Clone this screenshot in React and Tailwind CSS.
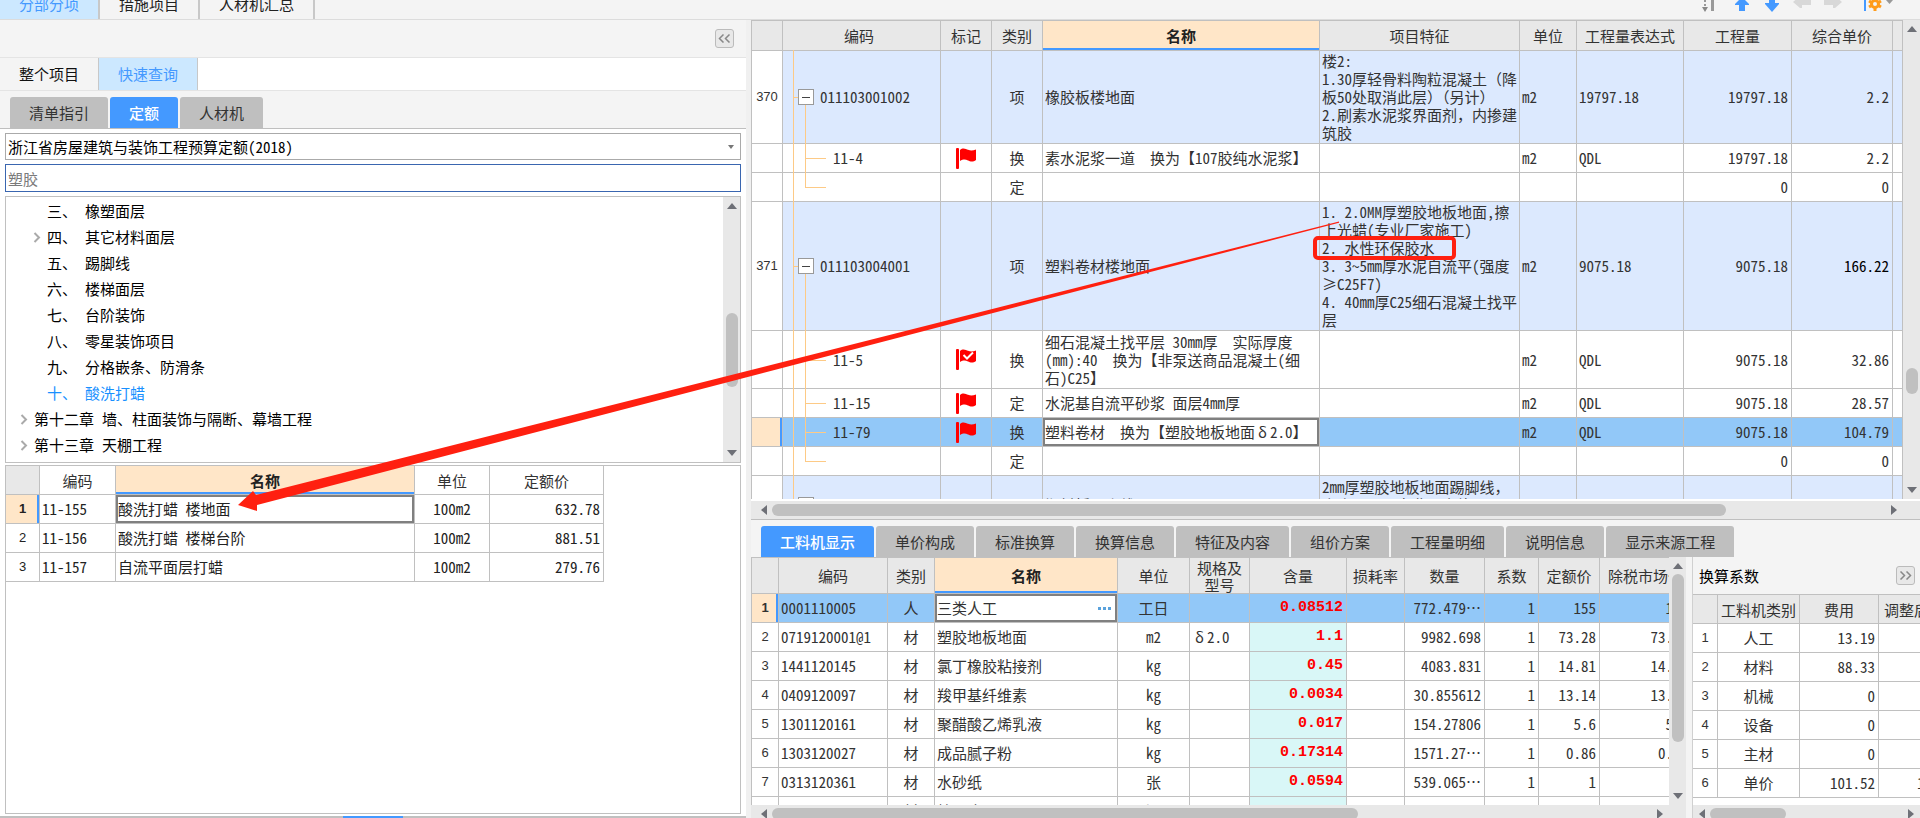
import { useState } from 'react';
import clsx from 'clsx';

const TREE = [
  { no: '三、', label: '橡塑面层', level: 1 },
  { no: '四、', label: '其它材料面层', level: 1, hasChildren: true },
  { no: '五、', label: '踢脚线', level: 1 },
  { no: '六、', label: '楼梯面层', level: 1 },
  { no: '七、', label: '台阶装饰', level: 1 },
  { no: '八、', label: '零星装饰项目', level: 1 },
  { no: '九、', label: '分格嵌条、防滑条', level: 1 },
  { no: '十、', label: '酸洗打蜡', level: 1, active: true },
  { no: '第十二章', label: '墙、柱面装饰与隔断、幕墙工程', level: 0, hasChildren: true },
  { no: '第十三章', label: '天棚工程', level: 0, hasChildren: true }
];

const QUOTAS = [
  { code: '11-155', name: '酸洗打蜡 楼地面', unit: '100m2', price: '632.78' },
  { code: '11-156', name: '酸洗打蜡 楼梯台阶', unit: '100m2', price: '881.51' },
  { code: '11-157', name: '自流平面层打蜡', unit: '100m2', price: '279.76' }
];

const BILL = [
  {
    no: '370', kind: 'item', height: 'h-[93px]', code: '011103001002', type: '项', name: '橡胶板楼地面',
    feature: '楼2:\n1.30厚轻骨料陶粒混凝土（降\n板50处取消此层）（另计）\n2.刷素水泥浆界面剂，内掺建\n筑胶',
    unit: 'm2', expr: '19797.18', qty: '19797.18', price: '2.2'
  },
  { kind: 'child', height: 'h-[29px]', code: '11-4', flag: 'flag', type: '换', name: '素水泥浆一道　换为【107胶纯水泥浆】', unit: 'm2', expr: 'QDL', qty: '19797.18', price: '2.2' },
  { kind: 'last', height: 'h-[29px]', type: '定', qty: '0', price: '0' },
  {
    no: '371', kind: 'item', height: 'h-[129px]', code: '011103004001', type: '项', name: '塑料卷材楼地面',
    feature: '1. 2.0MM厚塑胶地板地面,擦\n上光蜡(专业厂家施工)\n2. 水性环保胶水\n3. 3~5mm厚水泥自流平(强度\n≥C25F7)\n4. 40mm厚C25细石混凝土找平\n层',
    unit: 'm2', expr: '9075.18', qty: '9075.18', price: '166.22'
  },
  { kind: 'child', height: 'h-[58px]', code: '11-5', flag: 'checked', type: '换', name: '细石混凝土找平层 30mm厚　实际厚度\n(mm):40　换为【非泵送商品混凝土(细\n石)C25】', unit: 'm2', expr: 'QDL', qty: '9075.18', price: '32.86' },
  { kind: 'child', height: 'h-[29px]', code: '11-15', flag: 'flag', type: '定', name: '水泥基自流平砂浆 面层4mm厚', unit: 'm2', expr: 'QDL', qty: '9075.18', price: '28.57' },
  { kind: 'child', height: 'h-[29px]', code: '11-79', flag: 'flag', type: '换', name: '塑料卷材　换为【塑胶地板地面δ2.0】', unit: 'm2', expr: 'QDL', qty: '9075.18', price: '104.79', selected: true },
  { kind: 'last', height: 'h-[29px]', type: '定', qty: '0', price: '0' },
  { kind: 'item', height: 'h-[58px]', type: '项', name: '塑料板踢脚线', feature: '2mm厚塑胶地板地面踢脚线，\n高度120mm,专业厂家施工\n水性环保胶水' }
];

const MATERIALS = [
  { code: '0001110005', type: '人', name: '三类人工', unit: '工日', spec: '', amount: '0.08512', qty: '772.479⋯', factor: '1', price: '155', market: '155' },
  { code: '0719120001@1', type: '材', name: '塑胶地板地面', unit: 'm2', spec: 'δ2.0', amount: '1.1', qty: '9982.698', factor: '1', price: '73.28', market: '73.28' },
  { code: '1441120145', type: '材', name: '氯丁橡胶粘接剂', unit: 'kg', spec: '', amount: '0.45', qty: '4083.831', factor: '1', price: '14.81', market: '14.81' },
  { code: '0409120097', type: '材', name: '羧甲基纤维素', unit: 'kg', spec: '', amount: '0.0034', qty: '30.855612', factor: '1', price: '13.14', market: '13.14' },
  { code: '1301120161', type: '材', name: '聚醋酸乙烯乳液', unit: 'kg', spec: '', amount: '0.017', qty: '154.27806', factor: '1', price: '5.6', market: '5.6' },
  { code: '1303120027', type: '材', name: '成品腻子粉', unit: 'kg', spec: '', amount: '0.17314', qty: '1571.27⋯', factor: '1', price: '0.86', market: '0.86' },
  { code: '0313120361', type: '材', name: '水砂纸', unit: '张', spec: '', amount: '0.0594', qty: '539.065⋯', factor: '1', price: '1', market: '1' },
  { code: '', type: '材', name: '棉纱头', unit: 'kg', spec: '', amount: '', qty: '', factor: '', price: '', market: '' }
];

const FACTORS = [
  ['人工', '13.19', ''],
  ['材料', '88.33', ''],
  ['机械', '0', ''],
  ['设备', '0', ''],
  ['主材', '0', ''],
  ['单价', '101.52', '101.52']
];

const DETAIL_TABS = ['工料机显示', '单价构成', '标准换算', '换算信息', '特征及内容', '组价方案', '工程量明细', '说明信息', '显示来源工程'];

const UI_FONT = 'font-["Noto_Sans_CJK_SC",sans-serif]';
const GRID_FONT = 'font-["Noto_Sans_Mono_CJK_SC","Noto_Sans_CJK_SC",monospace]';
const LINE = 'border-r border-b border-[#c0c0c0]';

function Arrow({ dir }) {
  const points = {
    up: '0,8 5,2 10,8',
    down: '0,2 10,2 5,8',
    left: '8,0 2,5 8,10',
    right: '2,0 8,5 2,10'
  };
  return (
    <svg width="10" height="10" viewBox="0 0 10 10" aria-hidden="true">
      <polygon points={points[dir]} fill="#6e7077" />
    </svg>
  );
}

// Vertical scrollbar; before / size / after are flex weights of the track
function VScroll({ before, size, after }) {
  return (
    <div className="w-[17px] shrink-0 bg-[#e8e8e8] flex flex-col items-center py-1">
      <Arrow dir="up" />
      <div className="flex-1 flex flex-col items-center pt-[3px] pb-1">
        <div style={{ flexGrow: before }} />
        <div className="w-3 rounded-full bg-[#c0c0c0]" style={{ flexGrow: size }} />
        <div style={{ flexGrow: after }} />
      </div>
      <Arrow dir="down" />
    </div>
  );
}

function HScroll({ size, after }) {
  return (
    <div className="h-[18px] shrink-0 bg-[#e8e8e8] flex items-center px-1">
      <Arrow dir="left" />
      <div className="flex-1 flex px-[3px]">
        <div className="h-3 rounded-full bg-[#c0c0c0]" style={{ flexGrow: size }} />
        <div style={{ flexGrow: after }} />
      </div>
      <Arrow dir="right" />
    </div>
  );
}

function Flag({ checked }) {
  return (
    <svg width="20" height="21" viewBox="0 0 20 21" className="mx-auto block" role="img" aria-label="标记">
      <rect x="0" y="0" width="3" height="21" rx="1" fill="#ff0000" />
      <path d="M4 2 C7 -1 10 1 12 1.8 C15 3 17 2.500 20 1.500 V12 C17 14.500 14 13.500 12 12.600 C9 11 7 11.500 4 13 Z" fill="#ff0000" />
      {checked && <path d="M7.500 6 L11 9.500 L17 3.500" fill="none" stroke="#fff" strokeWidth="2" />}
    </svg>
  );
}

// Greek delta takes a full-width slot, like the Chinese characters round it
function Spec({ text = '' }) {
  const [before, after] = text.split('δ');
  if (after === undefined) return text;
  return (
    <>
      {before}
      <span className="inline-block w-[15px] text-center">δ</span>
      {after}
    </>
  );
}

function PanelTab({ active, children, ...rest }) {
  return (
    <button
      type="button"
      className={clsx(
        'h-[31px] px-[19px] rounded-t-[3px] text-[15px] leading-[18px] whitespace-nowrap',
        active ? 'bg-[#4499ff] text-white font-medium' : 'bg-[#bfbfbf] text-[#333]'
      )}
      {...rest}
    >
      {children}
    </button>
  );
}

function Th({ className, current, children }) {
  return (
    <th
      className={clsx(
        LINE, 'p-0 text-center align-middle text-[15px] leading-[17px] whitespace-pre overflow-hidden',
        current ? 'bg-[#ffe6c8] font-bold text-[#222] shadow-[inset_0_-2px_0_#4499ff]' : 'font-normal text-[#333]',
        className
      )}
    >
      {children}
    </th>
  );
}

function Td({ className, children }) {
  return (
    <td className={clsx(LINE, 'p-0 align-middle text-[15px] leading-[18px] whitespace-pre overflow-hidden', className)}>
      {children}
    </td>
  );
}

function RowNo({ active, children }) {
  return (
    <td
      className={clsx(
        LINE, 'p-0 text-center align-middle font-["Liberation_Sans",sans-serif] text-[13px] leading-[18px]',
        active ? 'bg-[#ffe6c8] font-bold shadow-[inset_-2px_0_0_#4499ff]' : 'bg-white'
      )}
    >
      {children}
    </td>
  );
}

// Connector lines of the bill tree, drawn behind the code text
function CodeCell({ row }) {
  return (
    <td className={clsx(LINE, 'relative p-0 align-middle text-[15px] leading-[18px]')}>
      <span className="absolute left-[10px] -top-px -bottom-px w-px bg-[#fdca86]" />
      {row.kind === 'item' && (
        <>
          <span className="absolute left-[10px] top-1/2 w-[6px] h-px bg-[#fdca86]" />
          <span className="absolute left-[22px] top-1/2 -bottom-px w-px bg-[#fdca86]" />
          <div className="relative flex items-center pl-[15px] gap-[6px]">
            <button type="button" aria-label="折叠" className="size-4 shrink-0 bg-white border border-[#999] flex items-center justify-center">
              <span className="w-2 h-px bg-[#444]" />
            </button>
            {row.code}
          </div>
        </>
      )}
      {row.kind !== 'item' && (
        <>
          <span className={clsx('absolute left-[22px] -top-px w-px bg-[#fdca86]', row.kind === 'last' ? 'bottom-1/2' : '-bottom-px')} />
          <span className="absolute left-[22px] top-1/2 w-[21px] h-px bg-[#fdca86]" />
          <div className="pl-[50px]">{row.code}</div>
        </>
      )}
    </td>
  );
}

function TopBar() {
  const tabs = ['分部分项', '措施项目', '人材机汇总'];
  return (
    <header className="h-5 shrink-0 flex items-end justify-between overflow-hidden bg-[#f4f4f4] border-b border-[#dcdcdc]">
      <nav className="flex">
        {tabs.map((tab, i) => (
          <button
            key={tab}
            type="button"
            className={clsx(
              'h-[30px] px-[19px] border-r-2 border-[#c8c8c8] text-[15px] leading-[18px]',
              i === 0 ? 'bg-[#cce8ff] text-[#4499ff]' : 'text-[#222]'
            )}
          >
            {tab}
          </button>
        ))}
      </nav>
      <div className="flex gap-[11px] pr-[25px]">
        <button type="button" aria-label="排序" className="w-5">
          <svg width="20" height="19" viewBox="0 0 20 19">
            <path d="M5 0V2M5 4V6" stroke="#999" strokeWidth="2" />
            <path d="M2 7H8L5 12Z" fill="#888" />
            <rect x="11" y="0" width="3" height="11" fill="#999" />
          </svg>
        </button>
        <button type="button" aria-label="上移" className="w-5">
          <svg width="20" height="19" viewBox="0 0 20 19">
            <path d="M11 -3 L18 4 V5 H14 V11 H8 V5 H4 V4 Z" fill="#4499ff" />
          </svg>
        </button>
        <button type="button" aria-label="下移" className="w-5">
          <svg width="20" height="19" viewBox="0 0 20 19">
            <path d="M7 0 H13 V3 H17 V4 L10 12 L3 4 V3 H7 Z" fill="#4499ff" />
          </svg>
        </button>
        <button type="button" aria-label="后退" className="w-5">
          <svg width="20" height="19" viewBox="0 0 20 19">
            <path d="M0 2 L7 -4 V0 H18 V5 H9 V8 H7 Z" fill="#d8d8d8" />
          </svg>
        </button>
        <button type="button" aria-label="前进" className="w-5">
          <svg width="20" height="19" viewBox="0 0 20 19">
            <path d="M18 2 L11 -4 V0 H0 V5 H9 V8 H11 Z" fill="#d8d8d8" />
          </svg>
        </button>
        <button type="button" aria-label="列设置" className="w-10">
          <svg width="40" height="19" viewBox="0 0 40 19">
            <rect x="9" y="0" width="2" height="11" fill="#4499ff" />
            <circle cx="20" cy="4" r="3.500" fill="none" stroke="#ff9c1a" strokeWidth="3" />
            <path d="M20 7V11M14 7L16.500 5.500M26 7L23.500 5.500M14 1L16.500 2.500M26 1L23.500 2.500" stroke="#ff9c1a" strokeWidth="3" />
            <path d="M31 0H38L34.500 4Z" fill="#999" />
          </svg>
        </button>
      </div>
    </header>
  );
}

function QueryPanel() {
  const [keyword, setKeyword] = useState('塑胶');
  return (
    <aside className="flex-[751] min-w-0 flex bg-[#f0f0f0]">
      <div className="flex-1 min-w-0 mr-[5px] flex flex-col bg-white">
        <div className="h-[38px] shrink-0 flex items-center justify-end pr-3 bg-[#f4f4f4] border-b border-[#e4e4e4]">
          <button type="button" aria-label="收起" className="size-[19px] rounded-[3px] border border-[#bbb] bg-[#e8e8e8] flex items-center justify-center">
            <svg width="13" height="9" viewBox="0 0 13 9" fill="none" stroke="#888" strokeWidth="1.500">
              <path d="M5.500 0.500L1.500 4.500L5.500 8.500M11.500 0.500L7.500 4.500L11.500 8.500" />
            </svg>
          </button>
        </div>
        <div className="h-[33px] shrink-0 flex border-b border-[#e4e4e4]">
          <button type="button" className="px-[19px] bg-[#f4f4f4] border-r border-[#c8c8c8] text-[15px] text-[#111]">整个项目</button>
          <button type="button" className="px-[19px] bg-[#cce8ff] border-r border-[#c8c8c8] text-[15px] text-[#4499ff]">快速查询</button>
        </div>
        <div className="h-[38px] shrink-0 flex items-end gap-0.5 pl-[10px] bg-[#f4f4f4] border-b border-[#bfbfbf]">
          <PanelTab>清单指引</PanelTab>
          <PanelTab active>定额</PanelTab>
          <PanelTab>人材机</PanelTab>
        </div>
        <div className={clsx('flex-1 min-h-0 flex flex-col gap-1 pt-1 pl-[5px] pr-[5px]', GRID_FONT)}>
          <div className="relative h-[27px] shrink-0">
            <select aria-label="定额库" className="w-full h-full appearance-none border border-[#aaa] bg-white pl-0.5 text-[15px] leading-[18px] text-black">
              <option>浙江省房屋建筑与装饰工程预算定额(2018)</option>
            </select>
            <svg width="6" height="4" viewBox="0 0 6 4" className="absolute right-[7px] top-3 pointer-events-none">
              <path d="M0 0H6L3 4Z" fill="#777" />
            </svg>
          </div>
          <input
            aria-label="查询"
            value={keyword}
            onChange={(e) => setKeyword(e.target.value)}
            className="h-7 shrink-0 border border-[#3a66b0] pl-0.5 text-[15px] leading-[18px] text-[#7a7a7a] bg-white"
          />
          <div className="flex-[270] min-h-0 flex border border-[#c0c0c0] overflow-hidden">
            <ul className="flex-1 pt-px">
              {TREE.map((node) => (
                <li
                  key={node.no}
                  className={clsx(
                    'h-[26px] flex items-center text-[15px] leading-[18px] whitespace-pre',
                    node.level === 0 ? 'pl-[14px]' : 'pl-[27px]',
                    node.active ? 'text-[#1890ff]' : 'text-black'
                  )}
                >
                  <span className="w-[14px] shrink-0">
                    {node.hasChildren && (
                      <svg width="8" height="11" viewBox="0 0 8 11" fill="none" stroke="#aaa" strokeWidth="2">
                        <path d="M1.500 1L6 5.500L1.500 10" />
                      </svg>
                    )}
                  </span>
                  <a href="#" className="flex gap-2">
                    <span>{node.no}</span>
                    <span>{node.label}</span>
                  </a>
                </li>
              ))}
            </ul>
            <VScroll before={100} size={75} after={58} />
          </div>
          <div className="flex-[353] min-h-0 -mt-0.5 mb-0.5 border border-[#c0c0c0] overflow-hidden">
            <table className="table-fixed border-separate border-spacing-0 w-[598px] text-[#222]">
              <colgroup>
                <col className="w-[34px]" />
                <col className="w-[76px]" />
                <col />
                <col className="w-[75px]" />
                <col className="w-[114px]" />
              </colgroup>
              <thead>
                <tr className="h-[29px]">
                  <Th className="bg-[#e8e8e8]" />
                  <Th>编码</Th>
                  <Th current>名称</Th>
                  <Th>单位</Th>
                  <Th>定额价</Th>
                </tr>
              </thead>
              <tbody>
                {QUOTAS.map((q, i) => (
                  <tr key={q.code} className="h-[29px]">
                    <RowNo active={i === 0}>{i + 1}</RowNo>
                    <Td className="pl-0.5">{q.code}</Td>
                    <Td className={clsx('pl-0.5', i === 0 && 'shadow-[inset_0_0_0_2px_#808080]')}>{q.name}</Td>
                    <Td className="text-center">{q.unit}</Td>
                    <Td className="text-right pr-[3px]">{q.price}</Td>
                  </tr>
                ))}
              </tbody>
            </table>
          </div>
        </div>
        <div className="h-0.5 shrink-0 flex justify-center bg-[#c0c0c0]">
          <span className="w-[60px] bg-[#4499ff]" />
        </div>
      </div>
    </aside>
  );
}

function BillGrid() {
  return (
    <section className="flex-[500] min-h-0 flex flex-col border-b border-[#bfbfbf] bg-[#e8e8e8]">
      <div className="flex-1 min-h-0 flex">
        <div className={clsx('flex-1 min-w-0 overflow-hidden bg-white border-t border-l border-[#c0c0c0]', GRID_FONT)}>
          <table className="table-fixed border-separate border-spacing-0 w-full text-[#333]">
            <colgroup>
              <col className="w-[31px]" />
              <col className="w-[158px]" />
              <col className="w-[51px]" />
              <col className="w-[51px]" />
              <col />
              <col className="w-[200px]" />
              <col className="w-[57px]" />
              <col className="w-[107px]" />
              <col className="w-[108px]" />
              <col className="w-[101px]" />
              <col className="w-[10px]" />
            </colgroup>
            <thead>
              <tr className="h-[30px] bg-[#e8e8e8]">
                <Th />
                <Th className="pr-[5px]">编码</Th>
                <Th>标记</Th>
                <Th>类别</Th>
                <Th current>名称</Th>
                <Th>项目特征</Th>
                <Th>单位</Th>
                <Th>工程量表达式</Th>
                <Th>工程量</Th>
                <Th>综合单价</Th>
                <Th />
              </tr>
            </thead>
            <tbody>
              {BILL.map((row, i) => (
                <tr
                  key={i}
                  className={clsx(row.height, row.selected ? 'bg-[#92c8f8]' : row.kind === 'item' ? 'bg-[#dce9fe]' : 'bg-white')}
                >
                  <RowNo active={row.selected}>{row.no}</RowNo>
                  <CodeCell row={row} />
                  <Td>{row.flag && <Flag checked={row.flag === 'checked'} />}</Td>
                  <Td className="text-center">{row.type}</Td>
                  <Td className={clsx('pl-0.5', row.selected && 'bg-white shadow-[inset_0_0_0_2px_#808080]')}>
                    <Spec text={row.name} />
                  </Td>
                  <Td className="pl-0.5">{row.feature}</Td>
                  <Td className="pl-0.5">{row.unit}</Td>
                  <Td className="pl-0.5">{row.expr}</Td>
                  <Td className="text-right pr-[3px]">{row.qty}</Td>
                  <Td className={clsx('text-right pr-[3px]', row.price === '166.22' && 'text-black')}>{row.price}</Td>
                  <Td />
                </tr>
              ))}
            </tbody>
          </table>
        </div>
        <VScroll before={332} size={26} after={88} />
      </div>
      <div className="border-t-2 border-white pr-[17px] pl-1">
        <HScroll size={956} after={160} />
      </div>
    </section>
  );
}

function MaterialGrid() {
  return (
    <div className="flex-1 min-w-0 flex flex-col">
      <div className="flex-1 min-h-0 flex">
        <div className={clsx('flex-1 min-w-0 overflow-hidden bg-white border-l border-t border-[#c0c0c0]', GRID_FONT)}>
          <table className="table-fixed border-separate border-spacing-0 w-full min-w-[940px] text-[#333]">
            <colgroup>
              <col className="w-[27px]" />
              <col className="w-[109px]" />
              <col className="w-[47px]" />
              <col />
              <col className="w-[72px]" />
              <col className="w-[60px]" />
              <col className="w-[97px]" />
              <col className="w-[58px]" />
              <col className="w-[80px]" />
              <col className="w-[54px]" />
              <col className="w-[61px]" />
              <col className="w-[92px]" />
            </colgroup>
            <thead>
              <tr className="h-9 bg-[#e8e8e8]">
                <Th />
                <Th>编码</Th>
                <Th>类别</Th>
                <Th current>名称</Th>
                <Th>单位</Th>
                <Th>{'规格及\n型号'}</Th>
                <Th>含量</Th>
                <Th>损耗率</Th>
                <Th>数量</Th>
                <Th>系数</Th>
                <Th>定额价</Th>
                <Th>除税市场价</Th>
              </tr>
            </thead>
            <tbody>
              {MATERIALS.map((m, i) => (
                <tr key={i} className={clsx('h-[29px]', i === 0 ? 'bg-[#92c8f8]' : 'bg-white')}>
                  <RowNo active={i === 0}>{m.code ? i + 1 : ''}</RowNo>
                  <Td className="pl-0.5">{m.code}</Td>
                  <Td className="text-center">{m.type}</Td>
                  <Td className={clsx('pl-0.5', i === 0 && 'bg-white shadow-[inset_0_0_0_2px_#808080]')}>
                    {i === 0 ? (
                      <div className="flex items-center justify-between pr-[6px]">
                        <span>{m.name}</span>
                        <button type="button" aria-label="选择" className="flex gap-0.5">
                          <span className="size-[3px] bg-[#5aa2dc]" />
                          <span className="size-[3px] bg-[#5aa2dc]" />
                          <span className="size-[3px] bg-[#5aa2dc]" />
                        </button>
                      </div>
                    ) : m.name}
                  </Td>
                  <Td className="text-center">{m.unit}</Td>
                  <Td className="pl-0.5"><Spec text={m.spec} /></Td>
                  <Td className={clsx('text-right pr-[3px] font-["Liberation_Mono",monospace] font-bold text-[#ff0000]', i > 0 && 'bg-[#d9f7f7]')}>{m.amount}</Td>
                  <Td />
                  <Td className="text-right pr-[3px]">{m.qty}</Td>
                  <Td className="text-right pr-[3px]">{m.factor}</Td>
                  <Td className="text-right pr-[3px]">{m.price}</Td>
                  <Td className="text-right pr-[3px]">{m.market}</Td>
                </tr>
              ))}
            </tbody>
          </table>
        </div>
        <VScroll before={0} size={166} after={45} />
      </div>
      <div className="h-[13px] shrink-0 overflow-hidden bg-[#e8e8e8] pr-[17px] pl-1">
        <HScroll size={587} after={294} />
      </div>
    </div>
  );
}

function FactorPanel() {
  return (
    <div className="w-[228px] shrink-0 flex flex-col bg-white border-l border-[#d0d0d0]">
      <div className="h-[37px] shrink-0 flex items-center justify-between pl-[6px] pr-[5px] bg-[#f4f4f4]">
        <h2 className={clsx('text-[15px] leading-[18px] text-black', GRID_FONT)}>换算系数</h2>
        <button type="button" aria-label="收起" className="size-[19px] rounded-[3px] border border-[#bbb] bg-[#e8e8e8] flex items-center justify-center">
          <svg width="13" height="9" viewBox="0 0 13 9" fill="none" stroke="#888" strokeWidth="1.500">
            <path d="M1.500 0.500L5.500 4.500L1.500 8.500M7.500 0.500L11.500 4.500L7.500 8.500" />
          </svg>
        </button>
      </div>
      <div className={clsx('flex-1 min-h-0 overflow-hidden border-t border-[#c0c0c0]', GRID_FONT)}>
        <table className="table-fixed border-separate border-spacing-0 w-[267px] text-[#333]">
          <colgroup>
            <col className="w-[25px]" />
            <col className="w-[82px]" />
            <col className="w-[79px]" />
            <col className="w-[81px]" />
          </colgroup>
          <thead>
            <tr className="h-[29px] bg-[#e8e8e8]">
              <Th />
              <Th>工料机类别</Th>
              <Th>费用</Th>
              <Th className="text-left pl-[5px]">调整后费用</Th>
            </tr>
          </thead>
          <tbody>
            {FACTORS.map(([name, cost, adjusted], i) => (
              <tr key={name} className="h-[29px]">
                <RowNo>{i + 1}</RowNo>
                <Td className="text-center">{name}</Td>
                <Td className="text-right pr-[3px]">{cost}</Td>
                <Td className="pl-[38px]">{adjusted}</Td>
              </tr>
            ))}
          </tbody>
        </table>
      </div>
      <div className="h-[13px] shrink-0 overflow-hidden">
        <HScroll size={76} after={118} />
      </div>
    </div>
  );
}

// Red markup on top of the workspace: a box round the feature line and an arrow to the quota
function Markup() {
  return (
    <svg className="absolute left-0 top-0 pointer-events-none" width="1920" height="818" viewBox="0 0 1920 818" aria-hidden="true">
      <rect x="1315" y="238" width="139" height="20" rx="3" fill="none" stroke="#ff2010" strokeWidth="4" />
      <polygon points="238,505 253,491 256,495 1339,221.5 1339,222.8 257,505 257,511" fill="#ff2010" />
    </svg>
  );
}

export default function App() {
  const [detailTab, setDetailTab] = useState('工料机显示');

  return (
    <div className={clsx('relative h-screen flex flex-col overflow-hidden bg-[#f4f4f4]', UI_FONT)}>
      <TopBar />
      <div className="flex-1 min-h-0 flex">
        <QueryPanel />
        <main className="flex-[1169] min-w-0 flex flex-col">
          <BillGrid />
          <section className="flex-[298] min-h-0 flex flex-col">
            <div className="shrink-0 flex gap-0.5 pt-[6px] pl-[10px]">
              {DETAIL_TABS.map((tab) => (
                <PanelTab key={tab} active={tab === detailTab} onClick={() => setDetailTab(tab)}>
                  {tab}
                </PanelTab>
              ))}
            </div>
            <div className="flex-1 min-h-0 flex gap-[6px]">
              <MaterialGrid />
              <FactorPanel />
            </div>
          </section>
        </main>
      </div>
      <Markup />
    </div>
  );
}
